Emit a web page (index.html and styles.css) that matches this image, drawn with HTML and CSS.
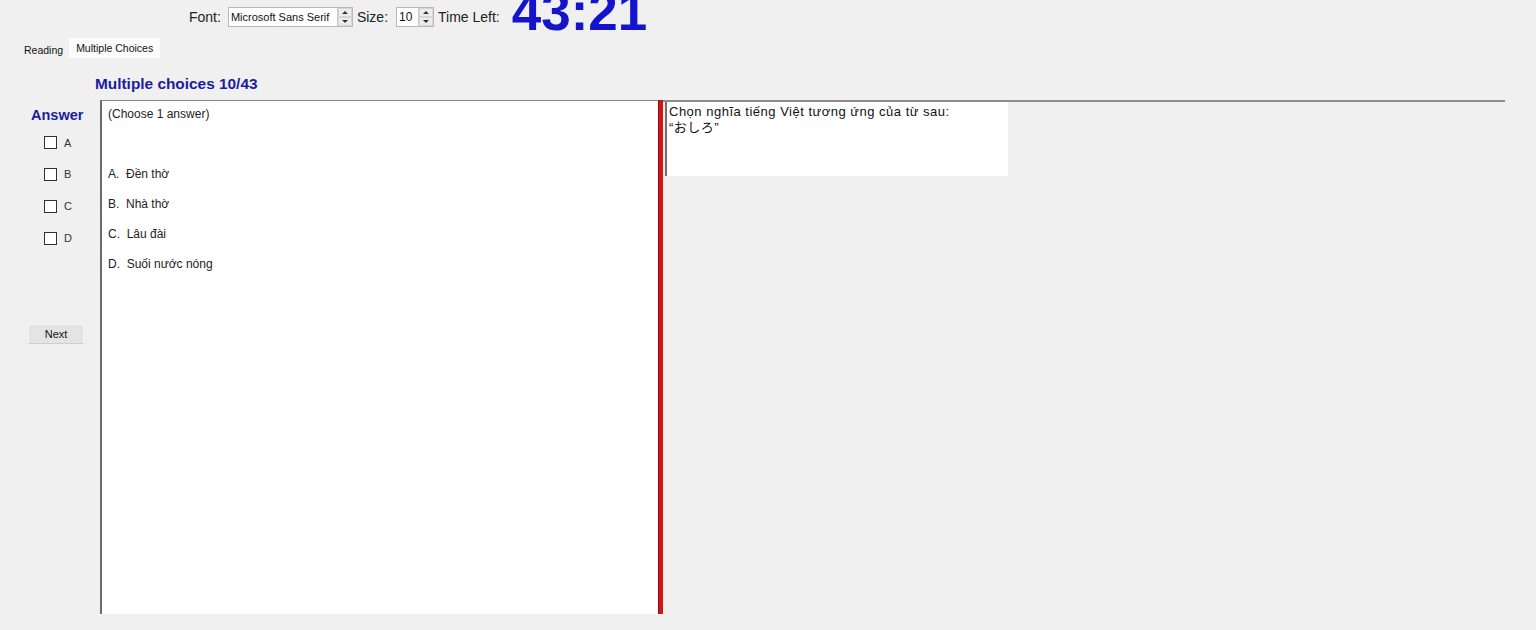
FILE: index.html
```html
<!DOCTYPE html>
<html>
<head>
<meta charset="utf-8">
<link rel="stylesheet" href="styles.css">
</head>
<body>
<div class="toolbar">
  <span class="lbl">Font:</span>
  <div class="spin font-spin"><span class="val">Microsoft Sans Serif</span><span class="arrows"><i class="up"></i><i class="down"></i></span></div>
  <span class="lbl">Size:</span>
  <div class="spin size-spin"><span class="val">10</span><span class="arrows"><i class="up"></i><i class="down"></i></span></div>
  <span class="lbl">Time Left:</span>
  <span class="timer">43:21</span>
</div>
<div class="tabs">
  <span class="tab">Reading</span>
  <span class="tab active">Multiple Choices</span>
</div>
<div class="title">Multiple choices 10/43</div>
<div class="main">
  <div class="sidebar">
    <div class="answer">Answer</div>
    <label class="opt"><span class="box"></span>A</label>
    <label class="opt"><span class="box"></span>B</label>
    <label class="opt"><span class="box"></span>C</label>
    <label class="opt"><span class="box"></span>D</label>
    <button class="next">Next</button>
  </div>
  <div class="panel">
    <div class="hint">(Choose 1 answer)</div>
    <div class="choice">A.&nbsp; Đền thờ</div>
    <div class="choice">B.&nbsp; Nhà thờ</div>
    <div class="choice">C.&nbsp; Lâu đài</div>
    <div class="choice">D.&nbsp; Suối nước nóng</div>
  </div>
  <div class="divider"></div>
  <div class="right">
    <div class="question">Chọn nghĩa tiếng Việt tương ứng của từ sau:<br>“おしろ”</div>
  </div>
</div>
</body>
</html>
```
FILE: styles.css
```css
html, body {
  margin: 0;
  padding: 0;
  background: #f0f0f0;
  font-family: "Liberation Sans", Arial, "Noto Sans CJK JP", sans-serif;
  color: #111;
  overflow: hidden;
  height: 630px;
}
.toolbar {
  display: flex;
  align-items: center;
  height: 34px;
  padding-left: 189px;
  font-size: 14px;
}
.lbl { margin-right: 6px; color: #222; }
.spin {
  display: flex;
  height: 20px;
  border: 1px solid #b9b9b9;
  background: #fff;
  box-sizing: border-box;
  margin-right: 4px;
}
.font-spin { width: 125px; margin-left: 1px; }
.size-spin { width: 38px; margin-left: 2px; }
.spin .val {
  flex: 1;
  font-size: 11px;
  line-height: 18px;
  padding-left: 2px;
  white-space: nowrap;
  overflow: hidden;
}
.size-spin .val { font-size: 12px; }
.arrows {
  width: 14px;
  display: flex;
  flex-direction: column;
  background: #ececec;
  border-left: 1px solid #c8c8c8;
}
.arrows i {
  flex: 1;
  position: relative;
  border: 1px solid #d6d6d6;
}
.arrows i::after {
  content: "";
  position: absolute;
  left: 3px;
  top: 2px;
  border-left: 3px solid transparent;
  border-right: 3px solid transparent;
}
.arrows .up::after { border-bottom: 3px solid #333; }
.arrows .down::after { border-top: 3px solid #333; }
.timer {
  margin-left: 6px;
  font-size: 53px;
  font-weight: bold;
  color: #1414cc;
  line-height: 34px;
  position: relative;
  top: -5px;
}
.tabs {
  display: flex;
  align-items: center;
  height: 20px;
  margin-top: 4px;
  padding-left: 20px;
  font-size: 10.5px;
}
.tab { padding: 0 4px; line-height: 20px; margin-top: 4px; }
.active { background: #fbfbfb; margin-top: 0; padding: 0 7px; margin-left: 2px; }
.title {
  margin-top: 18px;
  margin-left: 95px;
  font-size: 15.4px;
  font-weight: bold;
  color: #1c1c9e;
  height: 24px;
  line-height: 16px;
}
.main {
  display: flex;
  height: 514px;
}
.sidebar {
  width: 100px;
  display: flex;
  flex-direction: column;
}
.answer {
  margin: 7px 0 0 31px;
  font-size: 14.5px;
  font-weight: bold;
  color: #1c1c9e;
  height: 20px;
}
.opt {
  display: flex;
  align-items: center;
  margin-left: 44px;
  height: 32px;
  font-size: 11px;
  color: #333;
}
.opt:first-of-type { height: 31px; }
.box {
  width: 11px;
  height: 11px;
  border: 1px solid #333;
  background: #fff;
  margin-right: 7px;
}
.next {
  margin: 70px 0 0 28px;
  width: 56px;
  height: 20px;
  padding: 0;
  font-family: inherit;
  font-size: 11px;
  color: #111;
  background: #e4e4e4;
  border: 1px solid #f4f4f4;
  border-bottom-color: #cfcfcf;
}
.panel {
  width: 558px;
  box-sizing: border-box;
  background: #fff;
  border-left: 2px solid #6a6a6a;
  border-top: 1px solid #8a8a8a;
  padding-left: 6px;
  font-size: 12px;
  color: #222;
}
.hint { margin-top: 6px; height: 60px; }
.choice { height: 30px; }
.divider {
  width: 4px;
  background: #d41515;
  border-left: 1px solid #8a1010;
}
.right {
  flex: 1;
  margin-right: 31px;
  border-top: 2px solid #8c8c8c;
  padding-left: 2px;
}
.question {
  width: 343px;
  height: 74px;
  background: #fff;
  border-left: 2px solid #707070;
  padding-left: 2px;
  padding-top: 2px;
  font-size: 13px;
  letter-spacing: 0.5px;
  line-height: 16px;
  color: #111;
  box-sizing: border-box;
}
```
